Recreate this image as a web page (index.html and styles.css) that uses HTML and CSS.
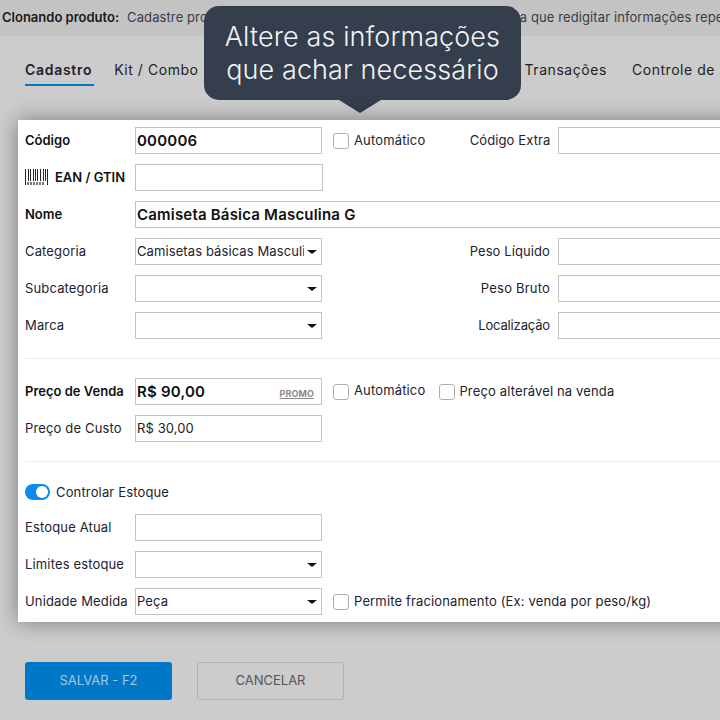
FILE: index.html
```html
<!DOCTYPE html>
<html lang="pt-BR">
<head>
<meta charset="utf-8">
<title>Clonando produto</title>
<link rel="stylesheet" href="styles.css">
</head>
<body>
<div class="page">
  <div class="notice">
    <strong>Clonando produto:</strong>
    <span class="notice-a">Cadastre pro</span>
    <span class="notice-b">a que redigitar informações repetidas</span>
  </div>
  <nav class="tabs">
    <span class="tab active">Cadastro</span>
    <span class="tab">Kit / Combo</span>
    <span class="tab tab-far">Transações</span>
    <span class="tab">Controle de</span>
  </nav>
  <div class="tip">Altere as informações<br>que achar necessário</div>
  <main class="card">
    <section class="group">
      <div class="row">
        <label class="lbl strong">Código</label>
        <div class="field big">000006</div>
        <span class="check"></span><span class="opt">Automático</span>
        <label class="side first">Código Extra</label>
        <div class="field side-field"></div>
      </div>
      <div class="row">
        <label class="lbl strong ean">
          <svg class="barcode" width="23" height="16" viewBox="0 0 23 16" aria-hidden="true">
            <path d="M.5 0v16M3.5 0v12M5.5 0v12M8.5 0v12M10.5 0v12M12.5 0v12M15.5 0v12M18.5 0v12M20.5 0v12M22.5 0v16" stroke="#2a2a2a" fill="none"/>
            <path d="M2 14.5h17" stroke="#777" stroke-width="3" stroke-dasharray="2 1" fill="none"/>
          </svg>
          EAN / GTIN
        </label>
        <div class="field wide1"></div>
      </div>
      <div class="row">
        <label class="lbl strong">Nome</label>
        <div class="field big full">Camiseta Básica Masculina G</div>
      </div>
      <div class="row">
        <label class="lbl">Categoria</label>
        <div class="field select"><span class="clip">Camisetas básicas Masculina</span><i class="caret"></i></div>
        <label class="side">Peso Líquido</label>
        <div class="field side-field"></div>
      </div>
      <div class="row">
        <label class="lbl">Subcategoria</label>
        <div class="field select"><i class="caret"></i></div>
        <label class="side side-loose">Peso Bruto</label>
        <div class="field side-field"></div>
      </div>
      <div class="row">
        <label class="lbl">Marca</label>
        <div class="field select"><i class="caret"></i></div>
        <label class="side side-tight">Localização</label>
        <div class="field side-field"></div>
      </div>
    </section>
    <hr class="rule">
    <section class="group">
      <div class="row">
        <label class="lbl strong">Preço de Venda</label>
        <div class="field big price">R$ 90,00<span class="promo">PROMO</span></div>
        <span class="check"></span><span class="opt opt-up">Automático</span>
        <span class="check check-2"></span><span class="opt opt-2">Preço alterável na venda</span>
      </div>
      <div class="row">
        <label class="lbl">Preço de Custo</label>
        <div class="field">R$ 30,00</div>
      </div>
    </section>
    <hr class="rule">
    <section class="group">
      <div class="toggle-row">
        <span class="toggle"></span>
        <span class="toggle-text">Controlar Estoque</span>
      </div>
      <div class="row">
        <label class="lbl">Estoque Atual</label>
        <div class="field"></div>
      </div>
      <div class="row">
        <label class="lbl">Limites estoque</label>
        <div class="field select"><i class="caret"></i></div>
      </div>
      <div class="row">
        <label class="lbl">Unidade Medida</label>
        <div class="field select">Peça<i class="caret"></i></div>
        <span class="check"></span><span class="opt">Permite fracionamento (Ex: venda por peso/kg)</span>
      </div>
    </section>
  </main>
  <footer class="actions">
    <button class="btn primary">SALVAR - F2</button>
    <button class="btn ghost">CANCELAR</button>
  </footer>
</div>
</body>
</html>
```

FILE: styles.css
```css
* { box-sizing: border-box; }
html, body { margin: 0; height: 100%; }
body {
  width: 720px;
  height: 720px;
  overflow: hidden;
  background: #cccccc;
  font-family: Inter, "Liberation Sans", sans-serif;
  font-size: 13px;
  color: #1c1c28;
}
.page { position: relative; width: 720px; height: 720px; overflow: hidden; }

.notice {
  height: 36px;
  background: #c3c3c3;
  display: flex;
  align-items: center;
  white-space: nowrap;
  padding: 0 0 2px 2px;
  font-size: 13px;
  letter-spacing: .1px;
  color: #3c3a48;
}
.notice strong { color: #1a1a1a; font-weight: 600; font-size: 13px; letter-spacing: 0; margin-right: 8px; }
.notice-b { margin-left: 312px; }

.tabs {
  display: flex;
  height: 50px;
  padding: 25px 0 0 25px;
  white-space: nowrap;
  font-size: 14px;
  letter-spacing: .55px;
  color: #1f2126;
}
.tab { margin-right: 26px; height: 25px; }
.tab.active {
  font-weight: 600;
  letter-spacing: .7px;
  margin-right: 20px;
  padding-right: 2px;
  border-bottom: 2px solid #0078c8;
}
.tab.tab-far { margin-left: 300px; margin-right: 25px; }

.tip {
  position: absolute;
  left: 204px;
  top: 6px;
  width: 317px;
  height: 94px;
  border-radius: 15px;
  background: #353e4d;
  color: #f2f3f5;
  font-size: 27px;
  font-weight: 300;
  line-height: 33px;
  letter-spacing: .1px;
  text-align: center;
  padding-top: 14px;
}
.tip::after {
  content: "";
  position: absolute;
  left: 135px;
  top: 94px;
  border-left: 21px solid transparent;
  border-right: 21px solid transparent;
  border-top: 13px solid #353e4d;
}

.card {
  position: relative;
  margin: 34px 0 0 18px;
  width: 760px;
  height: 502px;
  padding: 7px 0 0 7px;
  background: #fff;
  box-shadow: 0 0 20px rgba(0, 0, 0, .4);
}
.group { display: flex; flex-direction: column; gap: 10px; }
.row { display: flex; align-items: center; height: 27px; }
.lbl { width: 110px; flex: none; padding-bottom: 2px; white-space: nowrap; color: #22222e; letter-spacing: .15px; }
.strong { font-weight: 600; color: #111; letter-spacing: 0; }
.ean { display: flex; align-items: center; gap: 7px; }
.barcode { flex: none; }

.field {
  flex: none;
  position: relative;
  width: 187px;
  height: 27px;
  border: 1px solid #c4c4c4;
  padding: 0 1px;
  line-height: 25px;
  white-space: nowrap;
  color: #22222e;
  letter-spacing: .1px;
}
.big { font-size: 15px; font-weight: 600; color: #111; line-height: 25px; letter-spacing: .2px; }
.wide1 { width: 188px; }
.full { width: 600px; }
.select { padding-right: 17px; }
.clip { display: block; overflow: hidden; }
.caret {
  position: absolute;
  right: 4px;
  top: 11px;
  border-left: 5px solid transparent;
  border-right: 5px solid transparent;
  border-top: 4px solid #111;
}
.promo {
  position: absolute;
  right: 7px;
  top: 2px;
  font-size: 9px;
  font-weight: 700;
  letter-spacing: .1px;
  color: #8a8a8a;
  text-decoration: underline;
}
.check {
  flex: none;
  width: 16px;
  height: 16px;
  margin-left: 11px;
  border: 1px solid #b0b0b0;
  border-radius: 3px;
}
.check-2 { margin-left: 14px; }
.opt { margin-left: 5px; padding-bottom: 2px; white-space: nowrap; color: #22222e; letter-spacing: .15px; }
.opt-up { padding-bottom: 4px; }
.opt-2 { margin-left: 4px; }
.side { width: 81px; flex: none; margin-right: 8px; padding-bottom: 2px; text-align: right; white-space: nowrap; margin-left: 147px; color: #22222e; letter-spacing: .1px; }
.first { margin-left: 44px; }
.side-loose { letter-spacing: .2px; }
.side-tight { letter-spacing: -.15px; }
.side-field { width: 170px; }

.rule { margin: 19px 0; height: 1px; border: 0; background: #ececec; }

.toggle-row { display: flex; align-items: center; height: 16px; margin: 3px 0 4px; }
.toggle {
  position: relative;
  width: 25px;
  height: 16px;
  border-radius: 8px;
  background: #0b8af0;
}
.toggle::after {
  content: "";
  position: absolute;
  right: 2px;
  top: 2px;
  width: 12px;
  height: 12px;
  border-radius: 50%;
  background: #fff;
}
.toggle-text { margin-left: 6px; color: #22222e; letter-spacing: .15px; }

.actions {
  position: relative;
  display: flex;
  gap: 25px;
  margin-top: 20px;
  padding: 20px 0 20px 25px;
  background: #cccccc;
}
.btn {
  width: 147px;
  height: 38px;
  padding: 0 0 2px;
  border-radius: 3px;
  font-family: inherit;
  font-size: 13px;
  font-weight: 400;
}
.primary { background: #0078c8; border: 0; color: #a9c6da; }
.ghost { background: transparent; border: 1px solid #b2b2b2; color: #55555c; }
```
